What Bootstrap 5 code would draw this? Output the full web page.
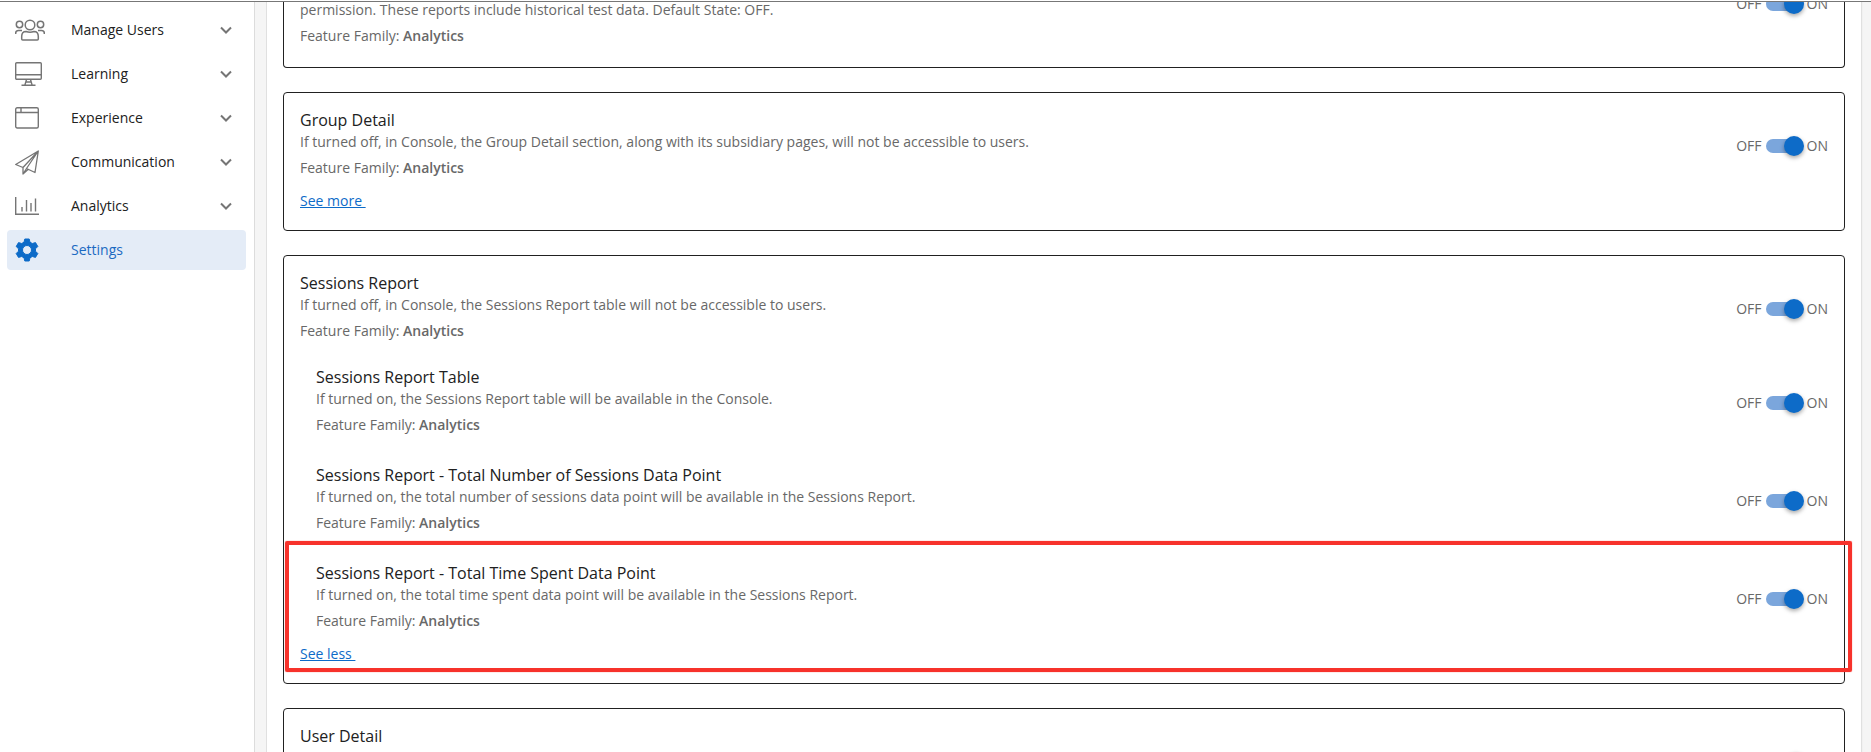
<!DOCTYPE html>
<html lang="en">
<head>
<meta charset="utf-8">
<meta name="viewport" content="width=device-width, initial-scale=1">
<title>Settings</title>
<link href="https://cdn.jsdelivr.net/npm/bootstrap@5.3.0/dist/css/bootstrap.min.css" rel="stylesheet">
<style>
  body { font-family: "Open Sans", "Noto Sans", sans-serif; font-size: 14px; line-height: 20px; color: #212121; background: #f5f5f5; }
  .app-shell { height: 100vh; padding-top: 1px; background: #fff; }
  .app-body { border-top: 1px solid #777; min-height: 0; background: #f5f5f5; }
  .side-menu { width: 255px; padding: 8px 8px 0 7px; border-right: 1px solid #dcdcdc; background: #fff; }
  .side-menu .nav { gap: 4px; }
  .menu-item { height: 40px; padding: 0 14px 0 8px; border-radius: 4px; color: #212121; }
  .menu-item:hover { color: #212121; }
  .menu-item.active { background: #e4ecf7; color: #1b6ac2; }
  .menu-icon { width: 56px; color: #757575; }
  .menu-item.active .menu-icon { color: #0d6bc8; }
  .menu-icon svg, .chevron { display: block; fill: none; stroke: currentColor; }
  .chevron { color: #757575; stroke-width: 2; }
  .page { margin: 0 10px 0 11px; padding: 0 16px; gap: 24px; border-left: 1px solid #e0e0e0; background: #fff; box-shadow: 1px 0 1px #e0e0e0; }
  .feature-card { padding: 16px; border: 1px solid #212121; border-radius: 4px; background: #fff; }
  .feature-card.scrolled { margin-top: -2px; border-top: 0; border-radius: 0 0 4px 4px; padding-top: 0; }
  .scrolled .switch-label { margin-top: -6px; }
  .feature-text { padding-bottom: 5px; color: #686868; }
  .feature-text.title-only { min-height: 74px; }
  .feature-text h2 { margin: 0 0 1px; font-size: 16px; line-height: 22px; font-weight: 400; color: #212121; }
  .feature-text p { margin: 0 0 6px; }
  .feature-text strong { font-weight: 600; }
  .sub-features { margin-top: 20px; gap: 24px; }
  .sub-feature { padding-left: 16px; }
  .switch-label { color: #686868; }
  .switch-input { appearance: none; width: 36px; height: 14px; margin: 0 5px 0 4px; border-radius: 7px; background: #7ba6dc; display: flex; align-items: center; justify-content: flex-end; }
  .switch-input::before { content: ""; flex: none; width: 20px; height: 20px; margin-right: -2px; border-radius: 50%; background: #0d6bc8; box-shadow: 0 2px 4px rgba(0,0,0,.35); }
  .switch-input:not(:checked) { justify-content: flex-start; background: #bbb; }
  .see-toggle { margin: 8px 0 3px; }
  .see-toggle a { color: #0d6bc8; white-space: pre; }
  .callout-box { inset: -21px -24px -5px -15px; border: 4px solid #f7322b; border-radius: 2px; box-shadow: 0 0 1px #f7322b; pointer-events: none; }
</style>
</head>
<body>
<div class="app-shell d-flex flex-column overflow-hidden">
  <div class="app-body d-flex flex-grow-1 overflow-hidden">
    <aside class="side-menu flex-shrink-0">
      <nav class="nav flex-column flex-nowrap">
        <a href="#" class="menu-item d-flex align-items-center text-decoration-none">
          <span class="menu-icon"><svg width="30" height="22" viewBox="0 0 30 22" stroke-width="1.5"><circle cx="15" cy="6" r="4.8"/><circle cx="4.500" cy="5.500" r="3.200"/><circle cx="25.500" cy="5.500" r="3.200"/><path d="M6.700 20V17.500Q6.700 12.500 11 12.500Q15 14 19 12.500Q23.300 12.500 23.300 17.500V20Q23.300 21 22.300 21H7.700Q6.700 21 6.700 20M.7 15V14Q.7 11.500 3.500 11.500H7M29.300 15V14Q29.300 11.500 26.500 11.500H23"/></svg></span>
          <span class="flex-grow-1">Manage Users</span>
          <svg class="chevron" width="12" height="8" viewBox="0 0 12 8"><path d="M1 1.500 6 6.500 11 1.500"/></svg>
        </a>
        <a href="#" class="menu-item d-flex align-items-center text-decoration-none">
          <span class="menu-icon"><svg width="27" height="24" viewBox="0 0 27 24" stroke-width="1.400"><rect x=".7" y=".7" width="25.600" height="16.600" rx="1"/><path d="M1 12.700H26M11.500 17.500 10 22.800M15.500 17.500 17 22.800M11 20H16M6.500 23.300H20.500"/></svg></span>
          <span class="flex-grow-1">Learning</span>
          <svg class="chevron" width="12" height="8" viewBox="0 0 12 8"><path d="M1 1.500 6 6.500 11 1.500"/></svg>
        </a>
        <a href="#" class="menu-item d-flex align-items-center text-decoration-none">
          <span class="menu-icon"><svg width="24" height="22" viewBox="0 0 24 22" stroke-width="1.400"><rect x=".7" y=".7" width="22.600" height="20.300" rx="1.500"/><path d="M1 5.500H23M6 1V5.500"/></svg></span>
          <span class="flex-grow-1">Experience</span>
          <svg class="chevron" width="12" height="8" viewBox="0 0 12 8"><path d="M1 1.500 6 6.500 11 1.500"/></svg>
        </a>
        <a href="#" class="menu-item d-flex align-items-center text-decoration-none">
          <span class="menu-icon"><svg width="24" height="25" viewBox="0 0 24 25" stroke-width="1.300" stroke-linejoin="round"><path d="M23.300 1 .7 14.500 8 17.500 23.300 1 20 22.500 11.500 18.500 23.300 1M8 17.500V24L11.500 18.500M8 24 13 19.500"/></svg></span>
          <span class="flex-grow-1">Communication</span>
          <svg class="chevron" width="12" height="8" viewBox="0 0 12 8"><path d="M1 1.500 6 6.500 11 1.500"/></svg>
        </a>
        <a href="#" class="menu-item d-flex align-items-center text-decoration-none">
          <span class="menu-icon"><svg width="24" height="18" viewBox="0 0 24 18" stroke-width="1.400"><path d="M.7 0V17.300H24M7 10V14.500M11.500 3V14.500M16 6V14.500M20.500 1.500V14.500"/></svg></span>
          <span class="flex-grow-1">Analytics</span>
          <svg class="chevron" width="12" height="8" viewBox="0 0 12 8"><path d="M1 1.500 6 6.500 11 1.500"/></svg>
        </a>
        <a href="#" class="menu-item active d-flex align-items-center text-decoration-none" aria-current="page">
          <span class="menu-icon"><svg width="24" height="24" viewBox="0 0 24 24"><path fill="currentColor" stroke="currentColor" stroke-linejoin="round" fill-rule="evenodd" d="M9.800 1H14.200L15 4.200 17.300 5.500 20.500 4.600 22.800 8.500 20.500 10.800V13.200L22.800 15.500 20.500 19.400 17.300 18.500 15 19.800 14.200 23H9.800L9 19.800 6.700 18.500 3.500 19.400 1.200 15.500 3.500 13.200V10.800L1.200 8.500 3.500 4.600 6.700 5.500 9 4.200ZM12 7.500A4.500 4.500 0 1 0 12 16.500 4.500 4.500 0 1 0 12 7.500Z"/></svg></span>
          <span class="flex-grow-1">Settings</span>
        </a>
      </nav>
    </aside>

    <main class="page d-flex flex-column flex-grow-1">
      <section class="feature-card scrolled flex-shrink-0">
        <div class="d-flex justify-content-between align-items-start">
          <div class="feature-text">
            <p>permission. These reports include historical test data. Default State: OFF.</p>
            <div>Feature Family: <strong>Analytics</strong></div>
          </div>
          <label class="switch-label d-flex align-items-center">OFF<input class="switch-input" type="checkbox" role="switch" checked>ON</label>
        </div>
      </section>

      <section class="feature-card flex-shrink-0">
        <div class="d-flex justify-content-between align-items-center">
          <div class="feature-text">
            <h2>Group Detail</h2>
            <p>If turned off, in Console, the Group Detail section, along with its subsidiary pages, will not be accessible to users.</p>
            <div>Feature Family: <strong>Analytics</strong></div>
          </div>
          <label class="switch-label d-flex align-items-center">OFF<input class="switch-input" type="checkbox" role="switch" checked>ON</label>
        </div>
        <div class="see-toggle"><a href="#">See more </a></div>
      </section>

      <section class="feature-card flex-shrink-0">
        <div class="d-flex justify-content-between align-items-center">
          <div class="feature-text">
            <h2>Sessions Report</h2>
            <p>If turned off, in Console, the Sessions Report table will not be accessible to users.</p>
            <div>Feature Family: <strong>Analytics</strong></div>
          </div>
          <label class="switch-label d-flex align-items-center">OFF<input class="switch-input" type="checkbox" role="switch" checked>ON</label>
        </div>
        <div class="sub-features d-flex flex-column">
          <div class="sub-feature d-flex justify-content-between align-items-center">
            <div class="feature-text">
              <h2>Sessions Report Table</h2>
              <p>If turned on, the Sessions Report table will be available in the Console.</p>
              <div>Feature Family: <strong>Analytics</strong></div>
            </div>
            <label class="switch-label d-flex align-items-center">OFF<input class="switch-input" type="checkbox" role="switch" checked>ON</label>
          </div>
          <div class="sub-feature d-flex justify-content-between align-items-center">
            <div class="feature-text">
              <h2>Sessions Report - Total Number of Sessions Data Point</h2>
              <p>If turned on, the total number of sessions data point will be available in the Sessions Report.</p>
              <div>Feature Family: <strong>Analytics</strong></div>
            </div>
            <label class="switch-label d-flex align-items-center">OFF<input class="switch-input" type="checkbox" role="switch" checked>ON</label>
          </div>
          <div class="position-relative">
            <div class="sub-feature d-flex justify-content-between align-items-center">
              <div class="feature-text">
                <h2>Sessions Report - Total Time Spent Data Point</h2>
                <p>If turned on, the total time spent data point will be available in the Sessions Report.</p>
                <div>Feature Family: <strong>Analytics</strong></div>
              </div>
              <label class="switch-label d-flex align-items-center">OFF<input class="switch-input" type="checkbox" role="switch" checked>ON</label>
            </div>
            <div class="see-toggle"><a href="#">See less </a></div>
            <div class="callout-box position-absolute"></div>
          </div>
        </div>
      </section>

      <section class="feature-card flex-shrink-0">
        <div class="d-flex justify-content-between align-items-center">
          <div class="feature-text title-only">
            <h2>User Detail</h2>
          </div>
          <input class="switch-input me-4" type="checkbox" role="switch" aria-label="User Detail" checked>
        </div>
      </section>
    </main>
  </div>
</div>
<script src="https://cdn.jsdelivr.net/npm/bootstrap@5.3.0/dist/js/bootstrap.bundle.min.js"></script>
</body>
</html>
